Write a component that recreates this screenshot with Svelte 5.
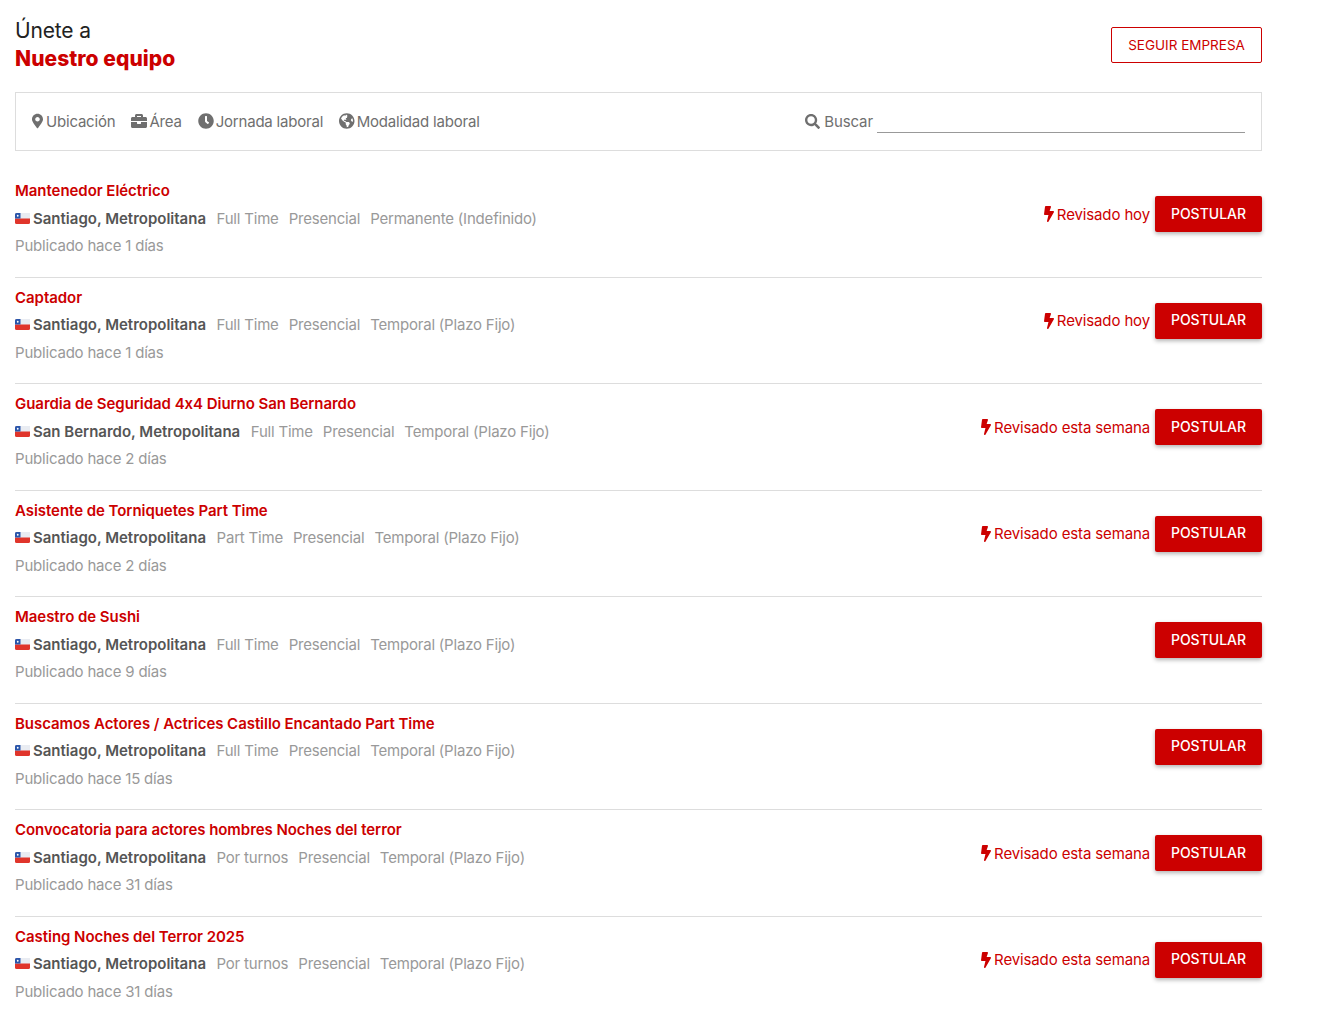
<script>
    const jobs = [
        { title: "Mantenedor Eléctrico", place: "Santiago, Metropolitana", hours: "Full Time", contract: "Permanente (Indefinido)", days: 1, seen: "Revisado hoy" },
        { title: "Captador", place: "Santiago, Metropolitana", hours: "Full Time", contract: "Temporal (Plazo Fijo)", days: 1, seen: "Revisado hoy" },
        { title: "Guardia de Seguridad 4x4 Diurno San Bernardo", place: "San Bernardo, Metropolitana", hours: "Full Time", contract: "Temporal (Plazo Fijo)", days: 2, seen: "Revisado esta semana" },
        { title: "Asistente de Torniquetes Part Time", place: "Santiago, Metropolitana", hours: "Part Time", contract: "Temporal (Plazo Fijo)", days: 2, seen: "Revisado esta semana" },
        { title: "Maestro de Sushi", place: "Santiago, Metropolitana", hours: "Full Time", contract: "Temporal (Plazo Fijo)", days: 9, seen: "" },
        { title: "Buscamos Actores / Actrices Castillo Encantado Part Time", place: "Santiago, Metropolitana", hours: "Full Time", contract: "Temporal (Plazo Fijo)", days: 15, seen: "" },
        { title: "Convocatoria para actores hombres Noches del terror", place: "Santiago, Metropolitana", hours: "Por turnos", contract: "Temporal (Plazo Fijo)", days: 31, seen: "Revisado esta semana" },
        { title: "Casting Noches del Terror 2025", place: "Santiago, Metropolitana", hours: "Por turnos", contract: "Temporal (Plazo Fijo)", days: 31, seen: "Revisado esta semana" },
    ];

    const filters = [
        { label: "Ubicación", box: "0 0 384 512", w: 11, d: "M172.268 501.67C26.97 291.031 0 256.001 0 192 0 85.961 85.961 0 192 0s192 85.961 192 192c0 64.001-26.97 99.031-172.268 309.67-9.535 13.774-29.93 13.773-39.464 0zM192 272c44.183 0 80-35.817 80-80s-35.817-80-80-80-80 35.817-80 80 35.817 80 80 80z" },
        { label: "Área", box: "0 0 512 512", w: 16, d: "M320 336c0 8.84-7.16 16-16 16h-96c-8.84 0-16-7.16-16-16v-48H0v144c0 25.6 22.4 48 48 48h416c25.6 0 48-22.4 48-48V288H320v48zm144-208h-80V80c0-25.6-22.4-48-48-48H176c-25.6 0-48 22.4-48 48v48H48c-25.6 0-48 22.4-48 48v80h512v-80c0-25.6-22.4-48-48-48zm-144 0H192V96h128v32z" },
        { label: "Jornada laboral", box: "0 0 512 512", w: 16, d: "M256,8C119,8,8,119,8,256S119,504,256,504,504,393,504,256,393,8,256,8Zm92.49,313h0l-20,25a16,16,0,0,1-22.49,2.5h0l-67-49.72a40,40,0,0,1-15-31.23V112a16,16,0,0,1,16-16h32a16,16,0,0,1,16,16V256l58,42.5A16,16,0,0,1,348.49,321Z" },
        { label: "Modalidad laboral", box: "0 0 496 512", w: 15.5, d: "M248 8C111.03 8 0 119.03 0 256s111.03 248 248 248 248-111.03 248-248S384.97 8 248 8zm82.29 357.6c-3.9 3.88-7.99 7.95-11.31 11.28-2.99 3-5.1 6.7-6.17 10.71-1.51 5.66-2.73 11.38-4.77 16.87l-17.39 46.85c-13.76 3-28 4.69-42.65 4.69v-27.38c1.69-12.62-7.64-36.26-22.63-51.25-6-6-9.37-14.14-9.37-22.63v-32.01c0-11.64-6.27-22.34-16.46-27.97-14.37-7.95-34.81-19.06-48.81-26.11-11.48-5.78-22.1-13.14-31.65-21.75l-.8-.72a114.792 114.792 0 0 1-18.06-20.74c-9.38-13.77-24.66-36.42-34.59-51.14 20.47-45.5 57.36-82.04 103.2-101.89l24.01 12.01C203.48 89.74 216 82.01 216 70.11v-11.3c7.99-1.29 16.12-2.11 24.39-2.42l28.3 28.3c6.25 6.25 6.25 16.38 0 22.63L264 112l-10.34 10.34c-3.12 3.12-3.12 8.19 0 11.31l4.69 4.69c3.12 3.12 3.12 8.19 0 11.31l-8 8a8.008 8.008 0 0 1-5.66 2.34h-8.99c-2.08 0-4.08.81-5.58 2.27l-9.92 9.65a8.008 8.008 0 0 0-1.58 9.31l15.59 31.19c2.66 5.32-1.21 11.58-7.15 11.58h-5.64c-1.93 0-3.79-.7-5.24-1.96l-9.28-8.06a16.017 16.017 0 0 0-15.55-3.1l-31.17 10.39a11.95 11.95 0 0 0-8.17 11.34c0 4.53 2.56 8.66 6.61 10.69l11.08 5.54c9.41 4.71 19.79 7.16 30.31 7.16s22.59 27.29 32 32h66.75c8.49 0 16.62 3.37 22.63 9.37l13.69 13.69a30.503 30.503 0 0 1 8.93 21.57 46.536 46.536 0 0 1-13.72 32.98zM417 274.25c-5.79-1.45-10.84-5-14.15-9.97l-17.98-26.97a23.97 23.97 0 0 1 0-26.62l19.59-29.38c2.32-3.47 5.5-6.29 9.24-8.15l12.98-6.49C440.2 193.59 448 223.87 448 256c0 8.67-.74 17.16-1.82 25.54L417 274.25z" },
    ];

    const bolt = "M296 160H180.6l42.6-129.8C227.2 15 215.7 0 200 0H56C44 0 33.8 8.9 32.2 20.8l-32 240C-1.7 275.2 9.5 288 24 288h118.7L96.6 482.5c-3.6 15.2 8 29.5 23.3 29.5 8.4 0 16.4-4.4 20.8-12l176-304c9.3-15.9-2.2-36-20.7-36z";
    const search = "M505 442.7L405.3 343c-4.5-4.5-10.6-7-17-7H372c27.6-35.3 44-79.7 44-128C416 93.1 322.9 0 208 0S0 93.1 0 208s93.1 208 208 208c48.3 0 92.7-16.4 128-44v16.3c0 6.4 2.5 12.5 7 17l99.7 99.7c9.4 9.4 24.6 9.4 33.9 0l28.3-28.3c9.4-9.4 9.4-24.6.1-34zM208 336c-70.7 0-128-57.2-128-128 0-70.7 57.2-128 128-128 70.7 0 128 57.2 128 128 0 70.7-57.2 128-128 128z";
</script>

<main class="page">
    <header class="top">
        <div>
            <h1>Únete a</h1>
            <h2>Nuestro equipo</h2>
        </div>
        <button class="follow">SEGUIR EMPRESA</button>
    </header>

    <section class="filters">
        {#each filters as f}
            <span class="filter">
                <svg viewBox={f.box} width={f.w} height="16" fill="currentColor"><path d={f.d} /></svg>
                {f.label}
            </span>
        {/each}
        <div class="search">
            <svg viewBox="0 0 512 512" width="15" height="15" fill="currentColor"><path d={search} /></svg>
            <label for="q">Buscar</label>
            <input id="q" type="text" />
        </div>
    </section>

    <section class="list">
        {#each jobs as job}
            <article class="job">
                <div class="info">
                    <div class="title">{job.title}</div>
                    <div class="meta">
                        <svg class="flag" viewBox="0 0 15 11" width="15" height="11">
                            <rect width="15" height="11" rx="1.5" fill="#e0352b" />
                            <path d="M1.5 0H15V5.5H0V1.5A1.5 1.5 0 0 1 1.5 0Z" fill="#e9ecf2" />
                            <path d="M1.5 0H5.5V5.5H0V1.5A1.5 1.5 0 0 1 1.5 0Z" fill="#2a56ab" />
                            <circle cx="2.75" cy="2.75" r="0.9" fill="#fff" />
                        </svg>
                        <strong>{job.place}</strong>
                        <span>{job.hours}</span>
                        <span>Presencial</span>
                        <span>{job.contract}</span>
                    </div>
                    <div class="date">Publicado hace {job.days} días</div>
                </div>
                <div class="actions">
                    {#if job.seen}
                        <span class="seen">
                            <svg viewBox="0 0 320 512" width="10" height="16" fill="currentColor"><path d={bolt} /></svg>
                            {job.seen}
                        </span>
                    {/if}
                    <button class="apply">POSTULAR</button>
                </div>
            </article>
        {/each}
    </section>
</main>

<style>
    :global(body) {
        background: #fff;
        overflow: hidden;
    }

    .page {
        width: 1247px;
        margin-left: 15px;
        font-family: Inter, "Liberation Sans", sans-serif;
        font-feature-settings: "calt" 0;
        font-size: 15px;
        color: #999;
    }

    .top {
        display: flex;
        justify-content: space-between;
        align-items: flex-start;
        padding-top: 17px;
        height: 92px;
        box-sizing: border-box;
    }

    h1,
    h2 {
        margin: 0;
        font-size: 21px;
        line-height: 28px;
        font-weight: 400;
        color: #222;
    }

    h1 {
        letter-spacing: -0.15px;
    }

    h2 {
        font-weight: 800;
        color: #c00;
        letter-spacing: 0.05px;
    }

    .follow {
        width: 151px;
        height: 36px;
        margin-top: 10px;
        padding: 0;
        background: #fff;
        border: 1px solid #c00;
        border-radius: 2px;
        color: #c00;
        font: 400 13.5px Inter, sans-serif;
    }

    .filters {
        display: flex;
        align-items: center;
        gap: 16px;
        height: 59px;
        box-sizing: border-box;
        padding: 0 16px 1px;
        border: 1px solid #ddd;
        color: #6f6f6f;
        letter-spacing: -0.2px;
    }

    .filter {
        display: flex;
        align-items: center;
        gap: 2px;
    }

    .filter:first-child {
        gap: 3px;
    }

    .search {
        display: flex;
        align-items: center;
        gap: 4px;
        margin-left: auto;
        letter-spacing: -0.1px;
    }

    input {
        width: 368px;
        height: 22px;
        box-sizing: border-box;
        margin-top: 2px;
        border: 0;
        border-bottom: 1px solid #999;
        outline: none;
    }

    .list {
        margin-top: 20px;
    }

    .job {
        display: flex;
        justify-content: space-between;
        align-items: flex-start;
        height: 106.5px;
        box-sizing: border-box;
        padding-top: 6px;
        border-bottom: 1px solid #ddd;
    }

    .title,
    .meta,
    .date {
        line-height: 27.5px;
    }

    .title {
        color: #c00;
        font-weight: 600;
        letter-spacing: -0.05px;
    }

    .meta {
        display: flex;
        align-items: center;
        gap: 10px;
        letter-spacing: -0.2px;
    }

    .flag {
        margin-right: -7px;
    }

    .meta strong {
        color: #555;
        font-weight: 600;
        letter-spacing: 0;
        margin-right: 0.5px;
    }

    .date {
        letter-spacing: -0.2px;
    }

    .actions {
        display: flex;
        align-items: center;
        gap: 5px;
        margin-top: 19px;
    }

    .seen {
        display: flex;
        align-items: center;
        gap: 3px;
        color: #c00;
        letter-spacing: -0.13px;
    }

    .apply {
        width: 107px;
        height: 36px;
        padding: 0 0 2px;
        background: #c00;
        border: 0;
        border-radius: 2px;
        box-shadow: 0 2px 4px rgba(0, 0, 0, 0.3);
        color: #fff;
        font: 500 14px Inter, sans-serif;
    }
</style>
